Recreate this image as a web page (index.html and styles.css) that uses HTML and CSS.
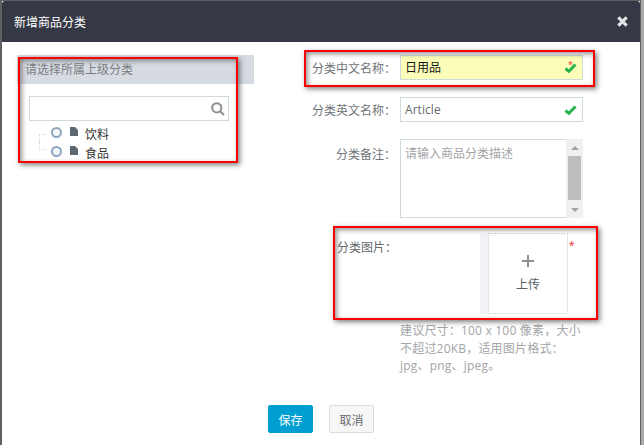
FILE: index.html
```html
<!DOCTYPE html>
<html lang="zh">
<head>
<meta charset="utf-8">
<title>新增商品分类</title>
<link rel="stylesheet" href="styles.css">
</head>
<body>
<div class="modal">
  <header class="modal-head">
    <h1 class="modal-title">新增商品分类</h1>
    <svg class="close" viewBox="0 0 10 10" width="11" height="11"><path d="M1.2 1.2 8.8 8.8M8.8 1.2 1.2 8.8"/></svg>
  </header>
  <div class="modal-body">
    <section class="tree-col">
      <div class="tree-title">请选择所属上级分类</div>
      <div class="search">
        <svg class="search-icon" viewBox="0 0 14 14" width="14" height="14"><circle cx="5.8" cy="5.8" r="4.6"/><path d="M9.2 9.2 13 13"/></svg>
      </div>
      <ul class="tree">
        <li class="node"><span class="branch"></span><span class="radio"></span><svg class="file" viewBox="0 0 8 9" width="8" height="9"><path d="M0 0H5L8 3V9H0Z"/></svg><span class="node-label">饮料</span></li>
        <li class="node"><span class="branch"></span><span class="radio"></span><svg class="file" viewBox="0 0 8 9" width="8" height="9"><path d="M0 0H5L8 3V9H0Z"/></svg><span class="node-label">食品</span></li>
      </ul>
    </section>
    <form class="form-col">
      <div class="row row-name">
        <label class="label">分类中文名称：</label>
        <div class="field field-filled"><span class="value value-cn">日用品</span>
          <svg class="check" viewBox="0 0 13 10" width="13" height="10"><path d="M1.5 5.5 4.8 8.3 11.5 1.5"/></svg>
          <span class="req-mark">*</span>
        </div>
      </div>
      <div class="row row-en">
        <label class="label">分类英文名称：</label>
        <div class="field"><span class="value">Article</span>
          <svg class="check" viewBox="0 0 13 10" width="13" height="10"><path d="M1.5 5.5 4.8 8.3 11.5 1.5"/></svg>
        </div>
      </div>
      <div class="row row-note">
        <label class="label label-note">分类备注：</label>
        <div class="textarea"><span class="placeholder">请输入商品分类描述</span>
          <div class="scrollbar"><span class="arrow-up"></span><span class="thumb"></span><span class="arrow-down"></span></div>
        </div>
      </div>
      <div class="row row-pic">
        <label class="label label-pic">分类图片：</label>
        <div class="pic-strip"></div>
        <div class="upload"><span class="plus"></span><span class="upload-text">上传</span></div>
        <span class="star">*</span>
      </div>
      <p class="hint">建议尺寸：100 x 100 像素，大小<br>不超过20KB，适用图片格式：<br>jpg、png、jpeg。</p>
    </form>
  </div>
  <footer class="actions">
    <button class="btn btn-primary" type="button">保存</button>
    <button class="btn btn-default" type="button">取消</button>
  </footer>
  <div class="mark mark-tree"></div>
  <div class="mark mark-name"></div>
  <div class="mark mark-pic"></div>
</div>
</body>
</html>
```
FILE: styles.css
```css
* { box-sizing: border-box; }
html, body { margin: 0; height: 100%; }
body {
  background: linear-gradient(90deg, #5f6062 641px, #a8a8a8 641px);
  padding: 1px 4px 0 2px;
  overflow: hidden;
  font-family: "Open Sans", "Noto Sans CJK SC", sans-serif;
  font-size: 12px;
  color: #676a6c;
}
.modal { position: relative; height: 444px; background: #fff; display: flex; flex-direction: column; }
.modal-head {
  height: 41px; background: #343945; flex: none;
  display: flex; align-items: center; justify-content: space-between;
  padding: 0 12px 0 12px; border-radius: 3px 3px 0 0;
}
.modal-title { margin: 0; font-size: 12px; font-weight: 400; color: #fff; font-family: "Noto Sans CJK SC", sans-serif; }
.close { fill: none; stroke: #e4e4e6; stroke-width: 2.8; }
.modal-body { flex: none; display: flex; height: 352px; }
.tree-col { width: 252px; padding: 13px 0 0 15px; flex: none; }
.tree-title { height: 29px; line-height: 28px; background: #d6dbe2; padding-left: 8px; color: #7b7e81; font-family: "Noto Sans CJK SC", sans-serif; }
.search { margin: 12px 0 0 12px; width: 200px; height: 25px; border: 1px solid #cfdadd; display: flex; align-items: center; justify-content: flex-end; padding-right: 3px; }
.search-icon { fill: none; stroke: #8f8f8f; stroke-width: 2; }
.tree { list-style: none; margin: 2px 0 0; padding: 0 0 0 22px; }
.node { display: flex; align-items: center; height: 19px; }
.branch { width: 7px; height: 8px; margin-right: 5px; border-left: 1px dotted #d8d8d8; border-top: 1px dotted #d8d8d8; align-self: flex-end; }
.node:last-child .branch { align-self: flex-start; border-top: 0; border-bottom: 1px dotted #d8d8d8; }
.radio { width: 11px; height: 11px; border-radius: 50%; border: 2px solid #8ea6bd; background: #f5f7f9; margin-right: 8px; }
.file { fill: #5e6871; margin: 0 7px 3px 0; }
.node-label { color: #333; font-family: "Noto Sans CJK SC", sans-serif; padding-top: 2px; }
.form-col { flex: 1; padding-top: 13px; }
.row { display: flex; align-items: flex-start; }
.label { width: 146px; padding-right: 4px; text-align: right; line-height: 25px; color: #717477; font-family: "Noto Sans CJK SC", sans-serif; flex: none; }
.label-note { padding-top: 2px; }
.field { position: relative; width: 183px; height: 25px; border: 1px solid #cfdadd; padding-left: 4px; line-height: 23px; display: flex; align-items: center; justify-content: space-between; padding-right: 5px; }
.field-filled { background: #fbfdb8; }
.value { color: #676a6c; letter-spacing: .05px; }
.value-cn { color: #111; font-family: "Noto Sans CJK SC", sans-serif; padding-bottom: 2px; }
.check { fill: none; stroke: #27b24f; stroke-width: 3; }
.req-mark { position: absolute; right: 9px; top: 4px; font-size: 9px; line-height: 9px; color: #e22; }
.row-en { margin-top: 17px; }
.row-note { margin-top: 17px; }
.textarea { position: relative; width: 183px; height: 79px; border: 1px solid #cfdadd; padding: 1px 4px; }
.placeholder { color: #a3a5a7; line-height: 23px; font-family: "Noto Sans CJK SC", sans-serif; }
.scrollbar { position: absolute; right: -1px; top: -1px; bottom: -1px; width: 17px; background: #f0f0f0; display: flex; flex-direction: column; align-items: center; justify-content: space-between; padding: 7px 0 6px; }
.thumb { width: 13px; height: 44px; background: #bdbdbd; margin-top: -2px; }
.arrow-up { border: 4px solid transparent; border-top: 0; border-bottom: 4px solid #a3a3a3; }
.arrow-down { border: 4px solid transparent; border-bottom: 0; border-top: 4px solid #a3a3a3; }
.row-pic { margin-top: 15px; height: 81px; }
.label-pic { width: 60px; margin-left: 83px; padding: 6px 0 0; line-height: 15px; color: #676a6c; text-align: left; }
.pic-strip { margin-left: 83px; width: 8px; height: 81px; background: #f1f1f6; }
.upload { width: 80px; height: 81px; border: 1px dotted #d0d0d0; display: flex; flex-direction: column; align-items: center; padding-top: 21px; }
.plus { width: 12px; height: 12px; background: linear-gradient(#8e9194, #8e9194) center/12px 2px no-repeat, linear-gradient(#8e9194, #8e9194) center/2px 12px no-repeat; }
.upload-text { margin-top: 8px; font-family: "Noto Sans CJK SC", sans-serif; color: #5a5d60; }
.star { font-size: 10px; color: #e22; line-height: 10px; margin-left: 1px; margin-top: 7px; }
.hint { margin: 8px 0 0 146px; width: 190px; line-height: 17.5px; color: #a3a5a7; letter-spacing: .2px; }
.actions { flex: none; display: flex; justify-content: flex-start; padding: 11px 0 0 266px; gap: 16px; }
.btn { height: 28px; width: 45px; border-radius: 2px; font: 12px "Noto Sans CJK SC", sans-serif; padding: 0; }
.btn-primary { background: #009fd1; border: 1px solid #009fd1; color: #fff; }
.btn-default { background: #f6f6f6; border: 1px solid #dcdcdc; color: #676a6c; }
.mark { position: absolute; border: 2px solid #f00; box-shadow: 2px 2px 5px rgba(60,60,60,.65), inset 2px 2px 5px rgba(60,60,60,.55); pointer-events: none; }
.mark-tree { left: 16px; top: 56px; width: 220px; height: 106px; }
.mark-name { left: 302px; top: 49px; width: 291px; height: 37px; }
.mark-pic { left: 331px; top: 225px; width: 265px; height: 94px; }
```
